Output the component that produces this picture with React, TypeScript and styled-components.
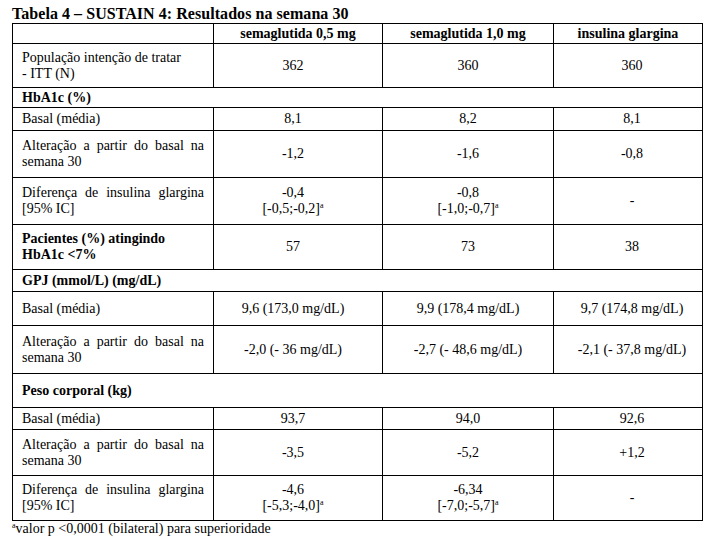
import React from "react";
import styled, { createGlobalStyle } from "styled-components";

type Ci = { main: string; ci: string };
type Value = string | Ci;

type Row =
  | { kind: "section"; label: string; height: number }
  | {
      kind: "data";
      label: string[];
      height: number;
      values: Value[];
      bold?: boolean;
      justify?: boolean;
    };

const header = ["semaglutida 0,5 mg", "semaglutida 1,0 mg", "insulina glargina"];

const rows: Row[] = [
  {
    kind: "data",
    label: ["População intenção de tratar", "- ITT (N)"],
    height: 44,
    values: ["362", "360", "360"],
  },
  { kind: "section", label: "HbA1c (%)", height: 20 },
  { kind: "data", label: ["Basal (média)"], height: 23, values: ["8,1", "8,2", "8,1"] },
  {
    kind: "data",
    label: ["Alteração a partir do basal na semana 30"],
    height: 47,
    justify: true,
    values: ["-1,2", "-1,6", "-0,8"],
  },
  {
    kind: "data",
    label: ["Diferença de insulina glargina [95% IC]"],
    height: 47,
    justify: true,
    values: [
      { main: "-0,4", ci: "[-0,5;-0,2]" },
      { main: "-0,8", ci: "[-1,0;-0,7]" },
      "-",
    ],
  },
  {
    kind: "data",
    label: ["Pacientes (%) atingindo", "HbA1c <7%"],
    height: 45,
    bold: true,
    values: ["57", "73", "38"],
  },
  { kind: "section", label: "GPJ (mmol/L) (mg/dL)", height: 22 },
  {
    kind: "data",
    label: ["Basal (média)"],
    height: 34,
    values: ["9,6 (173,0 mg/dL)", "9,9 (178,4 mg/dL)", "9,7 (174,8 mg/dL)"],
  },
  {
    kind: "data",
    label: ["Alteração a partir do basal na semana 30"],
    height: 48,
    justify: true,
    values: ["-2,0 (- 36 mg/dL)", "-2,7 (- 48,6 mg/dL)", "-2,1 (- 37,8 mg/dL)"],
  },
  { kind: "section", label: "Peso corporal (kg)", height: 34 },
  { kind: "data", label: ["Basal (média)"], height: 22, values: ["93,7", "94,0", "92,6"] },
  {
    kind: "data",
    label: ["Alteração a partir do basal na semana 30"],
    height: 46,
    justify: true,
    values: ["-3,5", "-5,2", "+1,2"],
  },
  {
    kind: "data",
    label: ["Diferença de insulina glargina [95% IC]"],
    height: 45,
    justify: true,
    values: [
      { main: "-4,6", ci: "[-5,3;-4,0]" },
      { main: "-6,34", ci: "[-7,0;-5,7]" },
      "-",
    ],
  },
];

// small nudges so each column's numbers sit where the original puts them
const colPad = ["0 10px 0 0", "0 2px", "0 0 0 8px"];

const App = () => {
  return (
    <Page>
      <GlobalStyle />
      <Title>Tabela 4 – SUSTAIN 4: Resultados na semana 30</Title>
      <Grid>
        <LabelCell $h={20} />
        {header.map((h) => (
          <HeadCell key={h} $h={20}>
            {h}
          </HeadCell>
        ))}

        {rows.map((row, i) =>
          row.kind === "section" ? (
            <SectionCell key={i} $h={row.height}>
              {row.label}
            </SectionCell>
          ) : (
            <React.Fragment key={i}>
              <LabelCell $h={row.height} $bold={row.bold}>
                <LabelText $justify={row.justify}>
                  {row.label.map((l, k) => (
                    <React.Fragment key={k}>
                      {k > 0 && <br />}
                      {l}
                    </React.Fragment>
                  ))}
                </LabelText>
              </LabelCell>
              {row.values.map((v, j) => (
                <ValueCell key={j} $h={row.height} $pad={colPad[j]}>
                  {typeof v === "string" ? (
                    v
                  ) : (
                    <>
                      <span>{v.main}</span>
                      <span>
                        {v.ci}
                        <Sup>a</Sup>
                      </span>
                    </>
                  )}
                </ValueCell>
              ))}
            </React.Fragment>
          )
        )}
      </Grid>
      <Footnote>
        <Sup>a</Sup>valor p &lt;0,0001 (bilateral) para superioridade
      </Footnote>
    </Page>
  );
};

export default App;

const GlobalStyle = createGlobalStyle`
  html, body {
    margin: 0;
    padding: 0;
    background: #fff;
  }
  body {
    font-family: "Liberation Serif", "Times New Roman", serif;
    color: #000;
  }
`;

const Page = styled.div`
  padding: 5px 0 0 12px;
  width: 691px;
`;

const Title = styled.h1`
  margin: 0;
  font-size: 16px;
  line-height: 18px;
  font-weight: bold;
  letter-spacing: 0.05px;
`;

const Grid = styled.div`
  display: grid;
  grid-template-columns: 201px 169px 171px 149px;
  border-top: 1px solid #000;
  border-left: 1px solid #000;
  font-size: 14px;
  line-height: 16px;
`;

const BaseCell = styled.div<{ $h?: number }>`
  box-sizing: border-box;
  height: ${(p) => p.$h ?? 20}px;
  border-right: 1px solid #000;
  border-bottom: 1px solid #000;
  display: flex;
  align-items: center;
`;

const LabelCell = styled(BaseCell)<{ $bold?: boolean }>`
  padding: 0 9px;
  font-weight: ${(p) => (p.$bold ? "bold" : "normal")};
`;

const LabelText = styled.div<{ $justify?: boolean }>`
  width: 100%;
  text-align: ${(p) => (p.$justify ? "justify" : "left")};
`;

const HeadCell = styled(BaseCell)`
  justify-content: center;
  font-weight: bold;
  white-space: nowrap;
`;

const SectionCell = styled(BaseCell)`
  grid-column: 1 / -1;
  padding-left: 9px;
  font-weight: bold;
`;

const ValueCell = styled(BaseCell)<{ $pad?: string }>`
  flex-direction: column;
  justify-content: center;
  text-align: center;
  white-space: nowrap;
  padding: ${(p) => p.$pad ?? "0"};
`;

const Sup = styled.sup`
  font-size: 8px;
  line-height: 0;
  vertical-align: 5px;
`;

const Footnote = styled.p`
  margin: 0;
  font-size: 14px;
  line-height: 16px;
`;
